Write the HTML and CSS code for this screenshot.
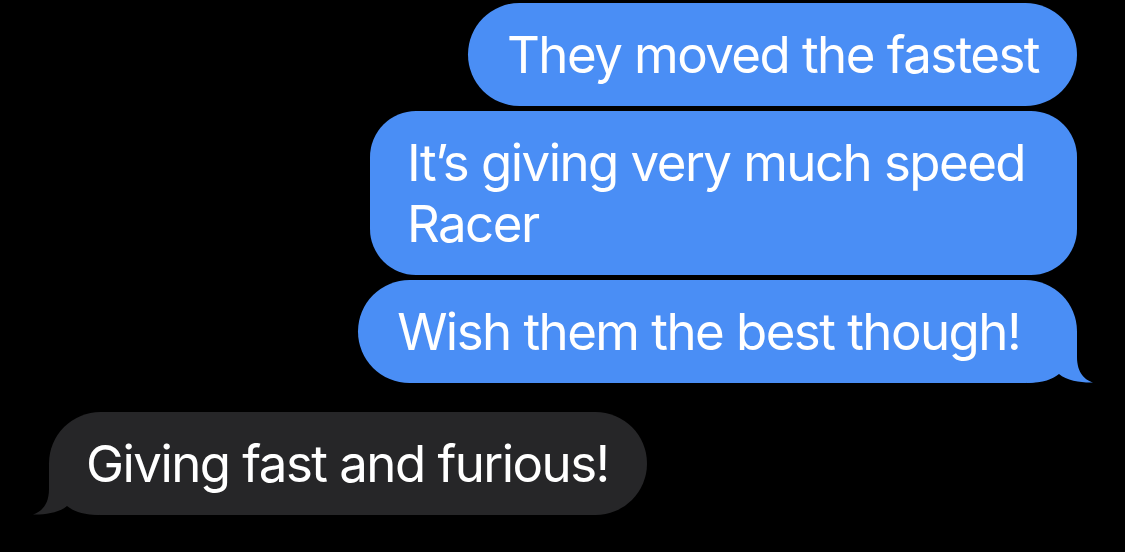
FILE: index.html
```html
<!DOCTYPE html>
<html lang="en">
<head>
<meta charset="utf-8">
<title>Messages</title>
<link rel="stylesheet" href="styles.css">
</head>
<body>
<main class="thread">
  <div class="row sent">
    <div class="bubble blue"><span class="text">They moved the fastest</span></div>
  </div>
  <div class="row sent">
    <div class="bubble blue wrap"><span class="text">It’s giving very much speed Racer</span></div>
  </div>
  <div class="row sent">
    <div class="bubble blue tailed">
      <svg class="tail tail-right" width="70" height="52" viewBox="0 0 70 52" aria-hidden="true"><path d="M0,0 L50,0 L50,26 C50,42 58,49 66,51.5 C56,52 40,50 32,43 C26,48 16,52 0,52 Z"/></svg>
      <span class="text">Wish them the best though!</span>
    </div>
  </div>
  <div class="row received">
    <div class="bubble gray">
      <svg class="tail tail-left" width="70" height="52" viewBox="0 0 70 52" aria-hidden="true"><path d="M0,0 L50,0 L50,26 C50,42 58,49 66,51.5 C56,52 40,50 32,43 C26,48 16,52 0,52 Z"/></svg>
      <span class="text">Giving fast and furious!</span>
    </div>
  </div>
</main>
</body>
</html>
```
FILE: styles.css
```css
html, body {
  margin: 0;
  padding: 0;
  background: #000;
}
body {
  width: 1125px;
  height: 552px;
  overflow: hidden;
  font-family: "Inter", "Liberation Sans", sans-serif;
  color: #fff;
}
.thread {
  display: flex;
  flex-direction: column;
  padding: 3px 48px 0 49px;
}
.row {
  display: flex;
  margin-bottom: 5px;
}
.row.sent { justify-content: flex-end; }
.row.received { justify-content: flex-start; margin-top: 24px; }
.bubble {
  position: relative;
  box-sizing: border-box;
  font-size: 51px;
  line-height: 61px;
  letter-spacing: -1.55px;
  padding: 21px 38px 21px 39px;
  border-radius: 52px;
  white-space: nowrap;
}
.text {
  position: relative;
  z-index: 1;
}
.bubble.wrap {
  white-space: normal;
  width: 707px;
  border-radius: 46px;
  padding-left: 37px;
}
.bubble.tailed { padding-right: 57px; }
.blue { background: #4a8ef5; }
.gray { background: #262628; padding-left: 37px; padding-right: 38px; }
.tail {
  position: absolute;
  bottom: 0;
}
.tail-right {
  right: -20px;
  fill: #4a8ef5;
}
.tail-left {
  left: -20px;
  fill: #262628;
  transform: scaleX(-1);
}
```
